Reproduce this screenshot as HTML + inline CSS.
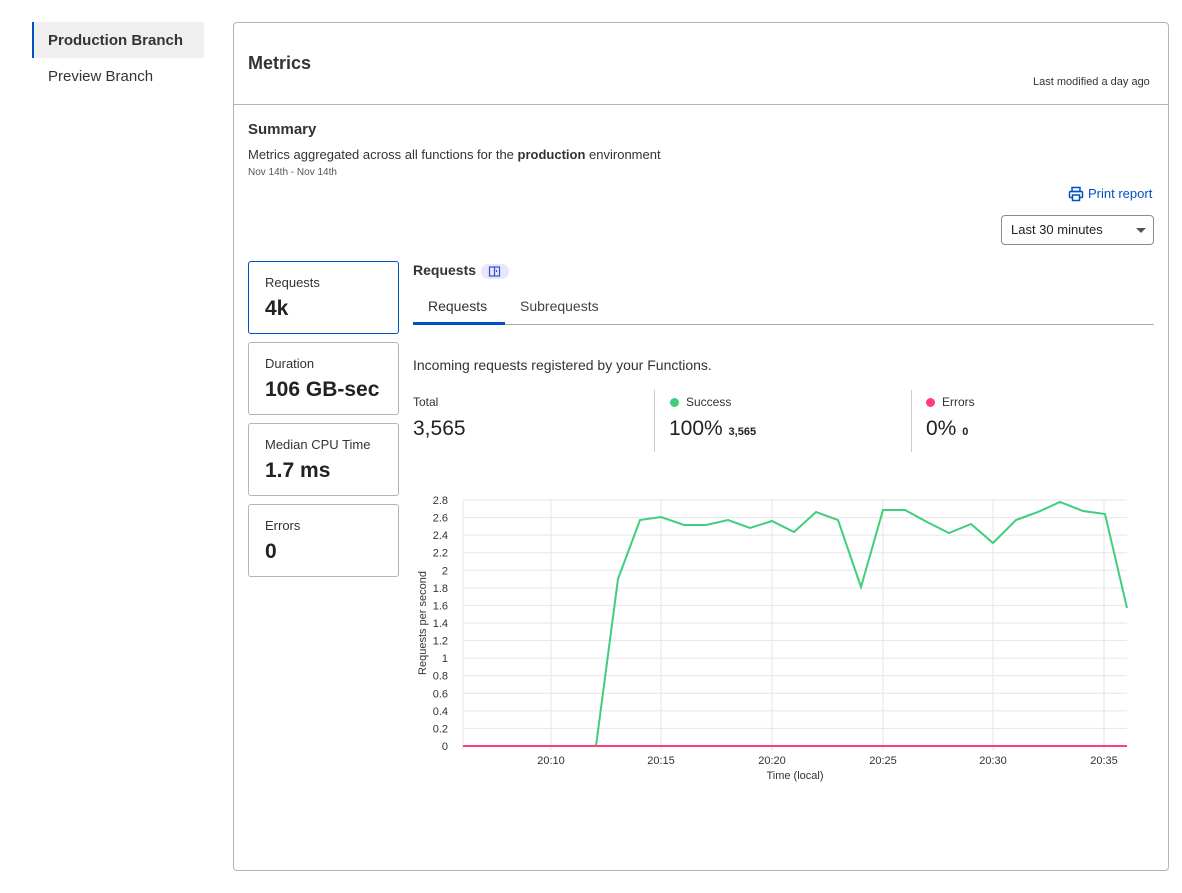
<!DOCTYPE html>
<html><head><meta charset="utf-8"><style>
*{margin:0;padding:0;box-sizing:border-box}
body{width:1182px;height:893px;background:#fff;font-family:"Liberation Sans",sans-serif;color:#313131;position:relative;overflow:hidden}
.a{position:absolute;white-space:nowrap}
.card{position:absolute;left:248px;width:151px;height:73px;border:1px solid #b5b5b5;border-radius:3px}
.card .l{position:absolute;left:16px;top:13px;font-size:13px;color:#333}
.card .v{position:absolute;left:16px;top:35px;font-size:21px;font-weight:bold;color:#222}
</style></head><body>
<div class="a" style="left:32px;top:22px;width:172px;height:36px;background:#efefef;border-left:2px solid #0051c3"></div>
<div class="a" style="left:48px;top:32px;font-size:15px;font-weight:bold;color:#333">Production Branch</div>
<div class="a" style="left:48px;top:68px;font-size:15px;color:#333">Preview Branch</div>

<div class="a" style="left:233px;top:22px;width:936px;height:849px;border:1px solid #b5b5b5;border-radius:4px"></div>
<div class="a" style="left:234px;top:104px;width:934px;height:1px;background:#b5b5b5"></div>
<div class="a" style="left:248px;top:53px;font-size:18px;font-weight:bold;color:#333">Metrics</div>
<div class="a" style="left:1033px;top:76px;font-size:11px;color:#333">Last modified a day ago</div>

<div class="a" style="left:248px;top:121px;font-size:15px;font-weight:bold;color:#333">Summary</div>
<div class="a" style="left:248px;top:147px;font-size:13px;color:#333">Metrics aggregated across all functions for the <b>production</b> environment</div>
<div class="a" style="left:248px;top:167px;font-size:10px;color:#555">Nov 14th - Nov 14th</div>

<svg class="a" style="left:1068px;top:186px" width="16" height="16" viewBox="0 0 16 16" fill="none" stroke="#0051c3" stroke-width="1.5"><rect x="4" y="1.5" width="8" height="4"/><rect x="1.5" y="5.5" width="13" height="6" rx="1"/><rect x="4.5" y="9" width="7" height="5.5" fill="#fff"/></svg>
<div class="a" style="left:1088px;top:186px;font-size:13px;color:#0051c3">Print report</div>

<div class="a" style="left:1001px;top:215px;width:153px;height:30px;border:1px solid #8c8c8c;border-radius:4px"></div>
<div class="a" style="left:1011px;top:222px;font-size:13px;color:#222">Last 30 minutes</div>
<div class="a" style="left:1136px;top:228px;width:0;height:0;border-left:5px solid transparent;border-right:5px solid transparent;border-top:5px solid #555"></div>

<div class="card" style="top:261px;border-color:#0051c3"><div class="l">Requests</div><div class="v">4k</div></div>
<div class="card" style="top:342px"><div class="l">Duration</div><div class="v">106 GB-sec</div></div>
<div class="card" style="top:423px"><div class="l">Median CPU Time</div><div class="v">1.7 ms</div></div>
<div class="card" style="top:504px"><div class="l">Errors</div><div class="v">0</div></div>

<div class="a" style="left:413px;top:262px;font-size:14px;font-weight:bold;color:#333">Requests</div>
<div class="a" style="left:481px;top:264px;width:28px;height:15px;border-radius:8px;background:#e6e8fb"></div>
<svg class="a" style="left:488px;top:265px" width="13" height="13" viewBox="0 0 13 13" fill="none" stroke="#3a4bd6" stroke-width="1.2"><rect x="1.5" y="2" width="10" height="9"/><line x1="6.5" y1="2" x2="6.5" y2="11"/><line x1="8.5" y1="5" x2="8.5" y2="7"/></svg>

<div class="a" style="left:428px;top:298px;font-size:14px;color:#333">Requests</div>
<div class="a" style="left:520px;top:298px;font-size:14px;color:#444">Subrequests</div>
<div class="a" style="left:413px;top:324px;width:741px;height:1px;background:#aaa"></div>
<div class="a" style="left:413px;top:322px;width:92px;height:3px;background:#0051c3"></div>

<div class="a" style="left:413px;top:357px;font-size:14px;color:#333">Incoming requests registered by your Functions.</div>

<div class="a" style="left:413px;top:395px;font-size:12px;color:#333">Total</div>
<div class="a" style="left:413px;top:417px;font-size:21px;color:#222">3,565</div>
<div class="a" style="left:654px;top:390px;width:1px;height:62px;background:#ccc"></div>
<div class="a" style="left:670px;top:398px;width:9px;height:9px;border-radius:50%;background:#3fcf7b"></div>
<div class="a" style="left:686px;top:395px;font-size:12px;color:#333">Success</div>
<div class="a" style="left:669px;top:417px;font-size:21px;color:#222">100% <span style="font-size:11px;font-weight:bold">3,565</span></div>
<div class="a" style="left:911px;top:390px;width:1px;height:62px;background:#ccc"></div>
<div class="a" style="left:926px;top:398px;width:9px;height:9px;border-radius:50%;background:#ff3f75"></div>
<div class="a" style="left:942px;top:395px;font-size:12px;color:#333">Errors</div>
<div class="a" style="left:926px;top:417px;font-size:21px;color:#222">0% <span style="font-size:11px;font-weight:bold">0</span></div>

<svg class="a" style="left:0;top:0" width="1182" height="893" font-family="Liberation Sans, sans-serif" font-size="11" fill="#333">
<g stroke="#e6e6e6" stroke-width="1">
<line x1="463" y1="500" x2="1127" y2="500"/><line x1="463" y1="517.6" x2="1127" y2="517.6"/><line x1="463" y1="535.1" x2="1127" y2="535.1"/><line x1="463" y1="552.7" x2="1127" y2="552.7"/><line x1="463" y1="570.3" x2="1127" y2="570.3"/><line x1="463" y1="587.9" x2="1127" y2="587.9"/><line x1="463" y1="605.4" x2="1127" y2="605.4"/><line x1="463" y1="623" x2="1127" y2="623"/><line x1="463" y1="640.6" x2="1127" y2="640.6"/><line x1="463" y1="658.1" x2="1127" y2="658.1"/><line x1="463" y1="675.7" x2="1127" y2="675.7"/><line x1="463" y1="693.3" x2="1127" y2="693.3"/><line x1="463" y1="710.9" x2="1127" y2="710.9"/><line x1="463" y1="728.4" x2="1127" y2="728.4"/>
<line x1="463" y1="500" x2="463" y2="750"/><line x1="551" y1="500" x2="551" y2="750"/><line x1="661" y1="500" x2="661" y2="750"/><line x1="772" y1="500" x2="772" y2="750"/><line x1="883" y1="500" x2="883" y2="750"/><line x1="993" y1="500" x2="993" y2="750"/><line x1="1104" y1="500" x2="1104" y2="750"/>
</g>
<g text-anchor="end">
<text x="448" y="504">2.8</text><text x="448" y="521.6">2.6</text><text x="448" y="539.1">2.4</text><text x="448" y="556.7">2.2</text><text x="448" y="574.3">2</text><text x="448" y="591.9">1.8</text><text x="448" y="609.4">1.6</text><text x="448" y="627">1.4</text><text x="448" y="644.6">1.2</text><text x="448" y="662.1">1</text><text x="448" y="679.7">0.8</text><text x="448" y="697.3">0.6</text><text x="448" y="714.9">0.4</text><text x="448" y="732.4">0.2</text><text x="448" y="750">0</text>
</g>
<g text-anchor="middle">
<text x="551" y="764">20:10</text><text x="661" y="764">20:15</text><text x="772" y="764">20:20</text><text x="883" y="764">20:25</text><text x="993" y="764">20:30</text><text x="1104" y="764">20:35</text>
<text x="795" y="779">Time (local)</text>
<text transform="translate(426,623) rotate(-90)">Requests per second</text>
</g>
<polyline fill="none" stroke="#3fcf7b" stroke-width="2" points="463,746 596,746 618,579 640,520 661,517 684,525 706,525 728,520 750,528 772,521 794,532 816,512 838,520 861,587 883,510 905,510 927,522 949,533 971,524 993,543 1016,520 1038,512 1060,502 1083,511 1105,514 1127,608"/>
<line x1="463" y1="746" x2="1127" y2="746" stroke="#ff3f75" stroke-width="2"/>
</svg>
</body></html>
